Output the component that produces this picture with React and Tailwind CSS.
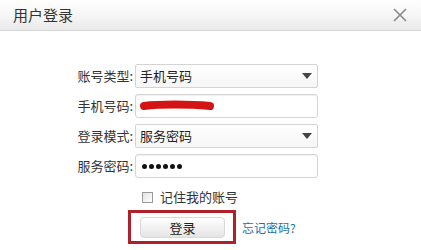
import React from "react";

const cjk = { fontFamily: '"Noto Sans CJK SC", "Liberation Sans", sans-serif' };

function Arrow() {
  return (
    <svg width="10" height="6" viewBox="0 0 10 6" className="mr-[5px]">
      <path d="M0 0 L10 0 L5 6 Z" fill="#444" />
    </svg>
  );
}

function Row({ label, children }) {
  return (
    <div className="flex items-center h-[24px]">
      <div className="w-[77px] text-right text-[13px] text-[#333] pr-[2px]">{label}</div>
      {children}
    </div>
  );
}

function SelectBox({ value }) {
  return (
    <div className="w-[183px] h-[24px] flex items-center justify-between border border-[#d4d4d4] rounded-[2px] bg-gradient-to-b from-white to-[#f6f6f6]">
      <span className="pl-[4px] text-[13px] text-[#222]">{value}</span>
      <Arrow />
    </div>
  );
}

function InputBox({ children }) {
  return (
    <div className="w-[183px] h-[24px] flex items-center border border-[#d4d4d4] rounded-[3px] bg-white shadow-[inset_0_1px_1px_rgba(0,0,0,0.06)]">
      {children}
    </div>
  );
}

export default function App() {
  return (
    <div className="w-[421px] h-[250px] bg-white overflow-hidden" style={cjk}>
      <div className="h-[31px] flex items-center justify-between pl-[13px] pr-[13px] bg-gradient-to-b from-white via-[#f6f6f6] to-[#e9e9e9] border-b border-[#d6d6d6]">
        <span className="text-[15px] text-[#333]">用户登录</span>
        <svg width="14" height="14" viewBox="0 0 14 14" className="mr-[1px]">
          <path d="M1 1 L13 13 M13 1 L1 13" stroke="#8a8a8a" strokeWidth="1.6" />
        </svg>
      </div>

      <div className="pt-[33px] pl-[58px] flex flex-col gap-[6px]">
        <Row label="账号类型:">
          <SelectBox value="手机号码" />
        </Row>
        <Row label="手机号码:">
          <InputBox>
            <svg width="76" height="12" viewBox="0 0 76 12" className="ml-[3px]">
              <path d="M5 6 C20 4, 50 4, 71 6" stroke="#d41414" strokeWidth="8" strokeLinecap="round" fill="none" />
            </svg>
          </InputBox>
        </Row>
        <Row label="登录模式:">
          <SelectBox value="服务密码" />
        </Row>
        <Row label="服务密码:">
          <InputBox>
            <div className="pl-[6px] flex gap-[2px]">
              {[0, 1, 2, 3, 4, 5].map((i) => (
                <div key={i} className="w-[5px] h-[5px] rounded-full bg-[#111]" />
              ))}
            </div>
          </InputBox>
        </Row>
      </div>

      <div className="mt-[9px] ml-[142px] flex items-center h-[20px]">
        <div className="w-[11px] h-[11px] border border-[#9a9a9a] bg-gradient-to-br from-[#e4e4e4] to-white" />
        <span className="ml-[7px] text-[13px] text-[#333]">记住我的账号</span>
      </div>

      <div className="mt-[3px] ml-[128px] flex items-center">
        <div className="w-[108px] h-[34px] border-[3px] border-[#b0202a] pt-[4px] pl-[9px]">
          <div className="w-[85px] h-[21px] rounded-[4px] border border-[#d8d8d8] bg-gradient-to-b from-white to-[#e4e4e4] flex items-center justify-center text-[13px] text-[#222]">
            登录
          </div>
        </div>
        <span className="ml-[6px] mt-[2px] text-[12px] text-[#1d6f9e]">忘记密码?</span>
      </div>
    </div>
  );
}
